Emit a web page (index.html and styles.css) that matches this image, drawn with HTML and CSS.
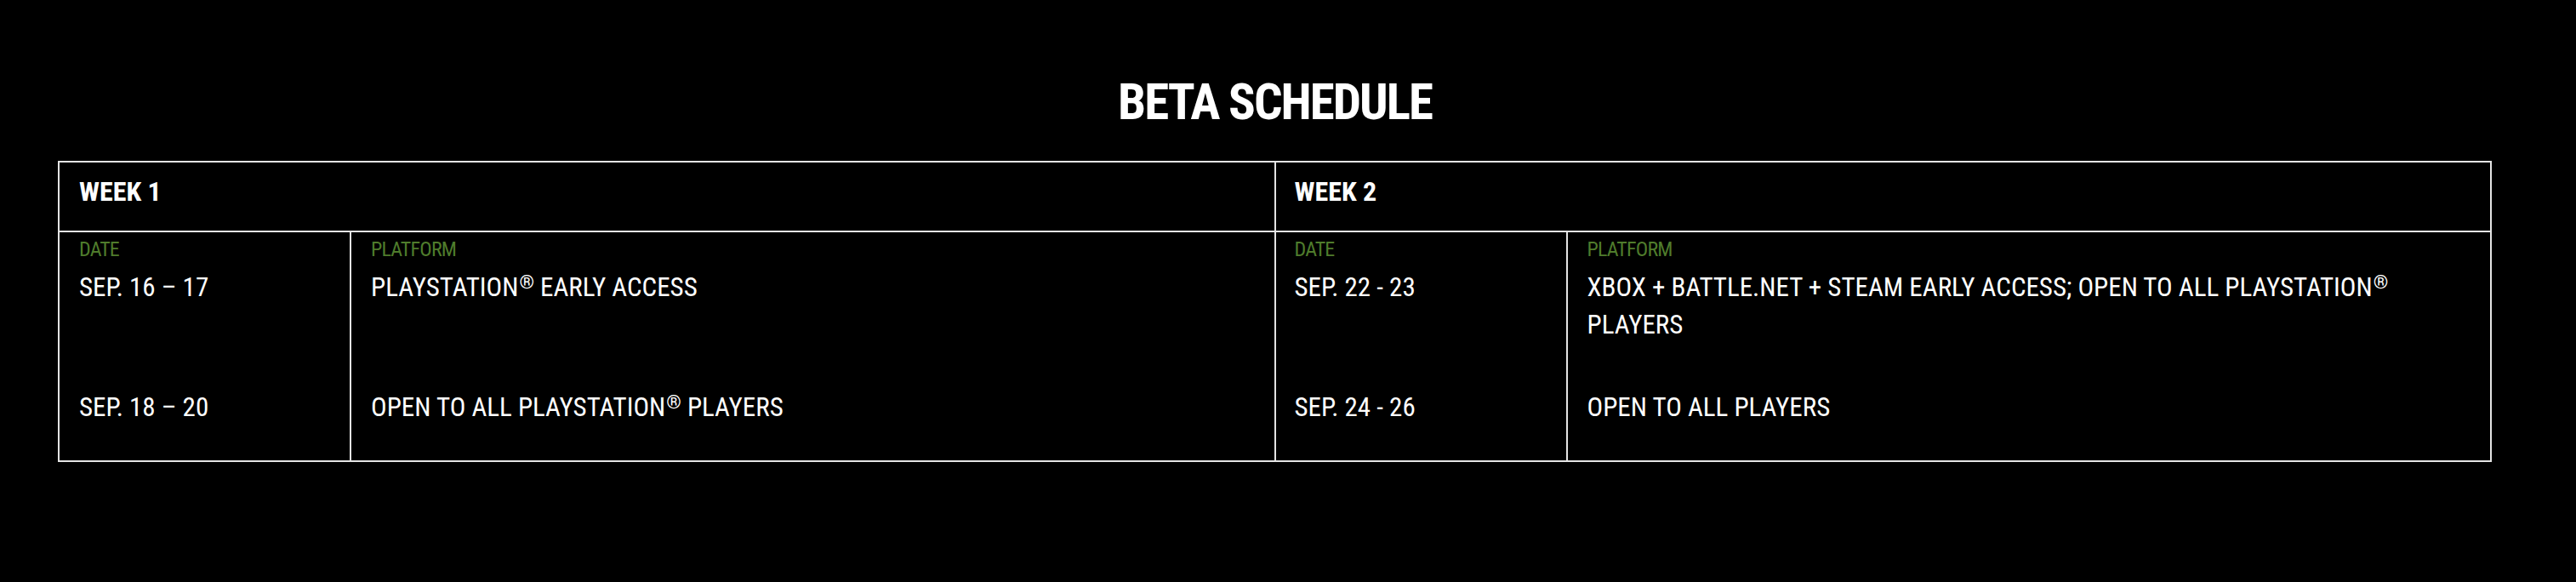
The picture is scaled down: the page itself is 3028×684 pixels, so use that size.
FILE: index.html
```html
<!DOCTYPE html>
<html lang="en">
<head>
<meta charset="utf-8">
<title>Beta Schedule</title>
<link rel="stylesheet" href="styles.css">
</head>
<body>
<main class="page">
  <h1 class="title">BETA SCHEDULE</h1>
  <div class="schedule">
    <div class="week-head">WEEK 1</div>
    <div class="week-head week-head--second">WEEK 2</div>

    <div class="cell cell--label">DATE</div>
    <div class="cell cell--label cell--platform">PLATFORM</div>
    <div class="cell cell--label cell--date2">DATE</div>
    <div class="cell cell--label cell--platform">PLATFORM</div>

    <div class="cell cell--first">SEP. 16 – 17</div>
    <div class="cell cell--first cell--platform">PLAYSTATION<span class="reg">®</span> EARLY ACCESS</div>
    <div class="cell cell--first cell--date2">SEP. 22 - 23</div>
    <div class="cell cell--first cell--platform">XBOX + BATTLE.NET + STEAM EARLY ACCESS; OPEN TO ALL PLAYSTATION<span class="reg">®</span> PLAYERS</div>

    <div class="cell cell--last">SEP. 18 – 20</div>
    <div class="cell cell--last cell--platform">OPEN TO ALL PLAYSTATION<span class="reg">®</span> PLAYERS</div>
    <div class="cell cell--last cell--date2">SEP. 24 - 26</div>
    <div class="cell cell--last cell--platform">OPEN TO ALL PLAYERS</div>
  </div>
</main>
</body>
</html>
```

FILE: styles.css
```css
html, body {
  margin: 0;
  padding: 0;
  background: #000;
}

body {
  font-family: "Roboto Condensed", "DejaVu Sans Condensed", "Liberation Sans", sans-serif;
  color: #fff;
}

.page {
  padding: 91px 99px 0 68px;
}

.title {
  margin: 0 0 40px;
  text-align: center;
  font-size: 59px;
  line-height: 58px;
  font-weight: 700;
  letter-spacing: -2px;
}

.schedule {
  display: grid;
  grid-template-columns: 341px 1fr 343px 1fr;
  border: 2px solid #e4e4e4;
}

.week-head {
  grid-column: span 2;
  padding: 18px 23px 30px;
  font-size: 32px;
  line-height: 32px;
  font-weight: 700;
  border-bottom: 2px solid #e4e4e4;
}

.week-head--second {
  border-left: 2px solid #e4e4e4;
  padding-left: 22px;
}

.cell {
  padding: 0 23px;
  font-size: 31px;
  line-height: 44px;
}

.cell--platform,
.cell--date2 {
  border-left: 2px solid #e4e4e4;
}

.cell--date2 {
  padding-left: 22px;
}

.cell--label {
  padding-top: 8px;
  font-size: 24px;
  line-height: 24px;
  color: #4f7c2c;
  letter-spacing: -0.8px;
}

.cell--first {
  padding-top: 11px;
  padding-bottom: 53px;
}

.cell--last {
  padding-bottom: 40px;
}

.reg {
  font-size: 0.72em;
  vertical-align: 0.42em;
  line-height: 0;
  margin-left: 1px;
}
```
